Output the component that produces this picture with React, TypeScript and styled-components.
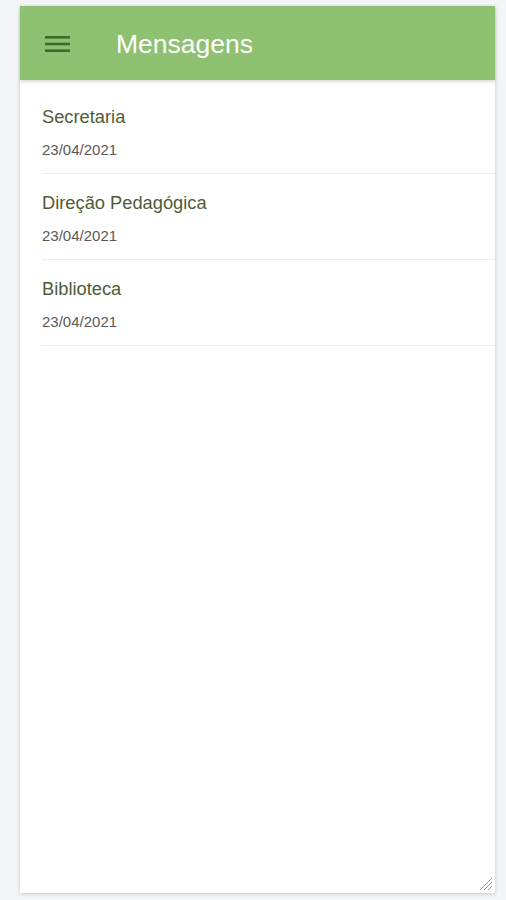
import React from "react";
import styled, { createGlobalStyle } from "styled-components";

const Global = createGlobalStyle`
  html, body { margin: 0; padding: 0; background: #f4f5f7; }
  body { font-family: "Liberation Sans", Arial, sans-serif; }
`;

const Page = styled.div`
  width: 506px;
  height: 900px;
  padding: 6px 11px 7px 20px;
  box-sizing: border-box;
  display: flex;
`;

const Card = styled.div`
  flex: 1;
  display: flex;
  flex-direction: column;
  background: #ffffff;
  box-shadow: 0 1px 4px rgba(0, 0, 0, 0.18);
  position: relative;
`;

const Header = styled.header`
  height: 74px;
  box-sizing: border-box;
  padding: 2px 0 0 25px;
  flex-shrink: 0;
  background: #8fc172;
  display: flex;
  align-items: center;
  gap: 45px;
  box-shadow: 0 2px 3px rgba(0, 0, 0, 0.15);
`;

const Title = styled.h1`
  margin: 0;
  font-size: 26.5px;
  font-weight: 400;
  color: #ffffff;
`;

const List = styled.ul`
  list-style: none;
  margin: 0;
  padding: 8px 0 0 22px;
  display: flex;
  flex-direction: column;
`;

const Item = styled.li`
  height: 86px;
  border-bottom: 1px solid #ececec;
  display: flex;
  flex-direction: column;
  padding-top: 19px;
  box-sizing: border-box;
`;

const Name = styled.div`
  font-size: 18.3px;
  color: #4e5d37;
  line-height: 20px;
`;

const DateText = styled.div`
  margin-top: 14px;
  font-size: 15px;
  color: #5a5a5a;
  line-height: 18px;
`;

const Grip = styled.svg`
  position: absolute;
  right: 2px;
  bottom: 2px;
`;

const Menu = () => (
  <svg width="26" height="18" viewBox="0 0 26 18">
    <rect x="0" y="1" width="25" height="2.6" fill="#3e6a2c" />
    <rect x="0" y="7.7" width="25" height="2.6" fill="#3e6a2c" />
    <rect x="0" y="14.4" width="25" height="2.6" fill="#3e6a2c" />
  </svg>
);

const items = [
  { name: "Secretaria", date: "23/04/2021" },
  { name: "Direção Pedagógica", date: "23/04/2021" },
  { name: "Biblioteca", date: "23/04/2021" },
];

export default function App() {
  return (
    <>
      <Global />
      <Page>
        <Card>
          <Header>
            <Menu />
            <Title>Mensagens</Title>
          </Header>
          <List>
            {items.map((it) => (
              <Item key={it.name}>
                <Name>{it.name}</Name>
                <DateText>{it.date}</DateText>
              </Item>
            ))}
          </List>
          <Grip width="16" height="16" viewBox="0 0 16 16">
            <line x1="15" y1="3" x2="3" y2="15" stroke="#9a9a9a" strokeWidth="1" />
            <line x1="15" y1="7" x2="7" y2="15" stroke="#9a9a9a" strokeWidth="1" />
            <line x1="15" y1="11" x2="11" y2="15" stroke="#9a9a9a" strokeWidth="1" />
          </Grip>
        </Card>
      </Page>
    </>
  );
}
